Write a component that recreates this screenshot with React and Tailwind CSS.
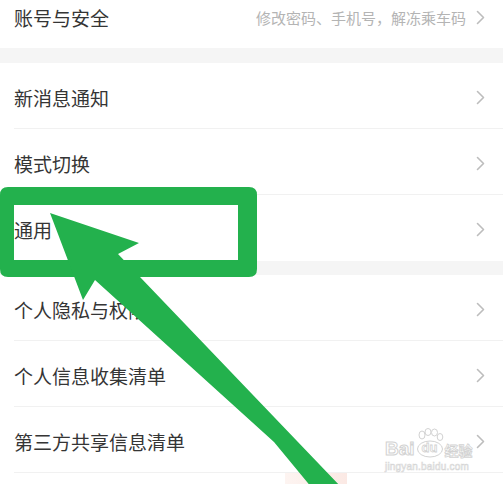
import React from 'react';

const Chevron = () => (
  <svg width="9" height="15" viewBox="0 0 9 15" className="shrink-0">
    <polyline points="1.5,1.5 7.5,7.5 1.5,13.5" fill="none" stroke="#bdbdbd" strokeWidth="1.6" strokeLinecap="round" strokeLinejoin="round" />
  </svg>
);

const Row = ({ label, divider = true }) => (
  <div className={`h-[66px] ml-[14px] pr-[18px] pt-[3px] flex items-center justify-between ${divider ? 'border-b border-[#f1f1f1]' : ''}`}>
    <span className="text-[19px] text-[#353535] leading-none">{label}</span>
    <Chevron />
  </div>
);

// green paint-style annotation drawn over the page
const Annotation = () => (
  <svg className="absolute inset-0 pointer-events-none" width="503" height="484" viewBox="0 0 503 484">
    <path
      fillRule="evenodd"
      fill="#23b14d"
      d="M0 195 Q0 187 8 187 L249 187 Q257 187 257 195 L257 269 Q257 277 249 277 L8 277 Q0 277 0 269 Z M14 205 L14 260 L238 260 L238 205 Z"
    />
    <polygon
      fill="#23b14d"
      points="50,213 139,243 118,254 342,488 312,488 274,442 95,280 83,300"
    />
  </svg>
);

const Watermark = () => (
  <div className="absolute left-[385px] top-[428px] flex flex-col pointer-events-none">
    <div className="flex items-end gap-[1px]">
      <span className="text-[19px] font-bold leading-none text-white [-webkit-text-stroke:1px_#d2d2d2] font-['Liberation_Sans',sans-serif]">Bai</span>
      <div className="relative w-[28px] h-[30px]">
        <svg width="28" height="30" viewBox="0 0 28 30" className="absolute inset-0">
          <g fill="#fff" stroke="#d2d2d2" strokeWidth="1">
            <ellipse cx="6" cy="7" rx="3" ry="4" />
            <ellipse cx="12" cy="4" rx="3" ry="3.5" />
            <ellipse cx="18.5" cy="4.5" rx="3" ry="3.5" />
            <ellipse cx="24" cy="9" rx="2.8" ry="3.5" />
            <ellipse cx="14" cy="21" rx="12.5" ry="8" />
          </g>
        </svg>
        <span className="absolute left-[6px] top-[13px] text-[13px] font-bold leading-none text-white [-webkit-text-stroke:0.8px_#d2d2d2] font-['Liberation_Sans',sans-serif]">du</span>
      </div>
      <span className="text-[14px] font-bold leading-none text-white [-webkit-text-stroke:0.8px_#d2d2d2] font-['Noto_Sans_CJK_SC',sans-serif] mb-[1px]">经验</span>
    </div>
    <span className="mt-[4px] text-[10px] leading-none text-white [-webkit-text-stroke:0.6px_#d6d6d6] font-['Liberation_Sans',sans-serif] tracking-[0.2px]">jingyan.baidu.com</span>
  </div>
);

export default function App() {
  return (
    <div className="relative w-[503px] h-[484px] overflow-hidden bg-white font-['Noto_Sans_CJK_SC',sans-serif]">
      <div className="h-[48px] ml-[14px] pr-[18px] pb-[13px] flex items-center justify-between">
        <span className="text-[19px] text-[#353535] leading-none">账号与安全</span>
        <div className="flex items-center gap-[10px]">
          <span className="text-[15px] text-[#b4b4b4] leading-none">修改密码、手机号，解冻乘车码</span>
          <Chevron />
        </div>
      </div>
      <div className="h-[15px] bg-[#f5f5f5]" />
      <Row label="新消息通知" />
      <Row label="模式切换" />
      <Row label="通用" divider={false} />
      <div className="h-[14px] bg-[#f5f5f5]" />
      <Row label="个人隐私与权限" />
      <Row label="个人信息收集清单" />
      <Row label="第三方共享信息清单" />
      <div className="flex h-[12px]">
        <div className="ml-[285px] w-[62px] h-full bg-gradient-to-r from-[#fdf4f1] to-[#fbe9e4]" />
      </div>
      <Watermark />
      <Annotation />
    </div>
  );
}
